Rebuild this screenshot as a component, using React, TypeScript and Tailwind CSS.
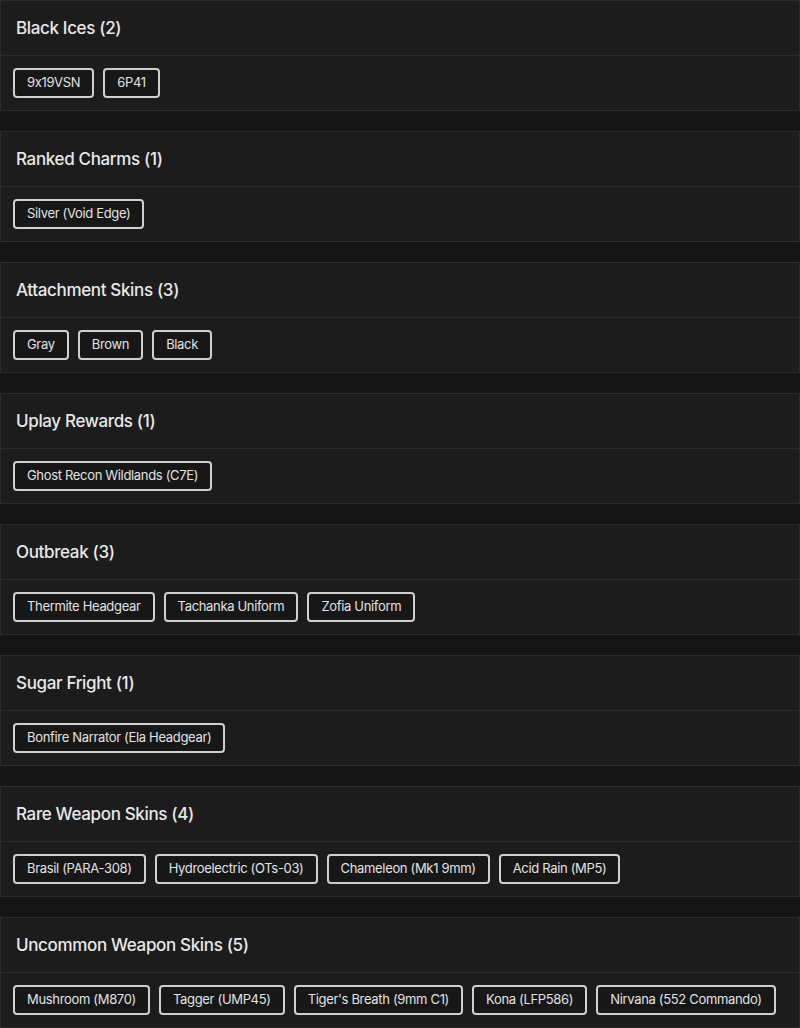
import React from "react";

const sections: { title: string; items: string[] }[] = [
  { title: "Black Ices (2)", items: ["9x19VSN", "6P41"] },
  { title: "Ranked Charms (1)", items: ["Silver (Void Edge)"] },
  { title: "Attachment Skins (3)", items: ["Gray", "Brown", "Black"] },
  { title: "Uplay Rewards (1)", items: ["Ghost Recon Wildlands (C7E)"] },
  { title: "Outbreak (3)", items: ["Thermite Headgear", "Tachanka Uniform", "Zofia Uniform"] },
  { title: "Sugar Fright (1)", items: ["Bonfire Narrator (Ela Headgear)"] },
  {
    title: "Rare Weapon Skins (4)",
    items: ["Brasil (PARA-308)", "Hydroelectric (OTs-03)", "Chameleon (Mk1 9mm)", "Acid Rain (MP5)"],
  },
  {
    title: "Uncommon Weapon Skins (5)",
    items: ["Mushroom (M870)", "Tagger (UMP45)", "Tiger's Breath (9mm C1)", "Kona (LFP586)", "Nirvana (552 Commando)"],
  },
];

export default function App() {
  return (
    <div
      className="min-h-[1028px] w-[800px] bg-[#151515] flex flex-col gap-[20px] [font-feature-settings:'calt'_0]"
      style={{ fontFamily: "Inter, 'Open Sans', sans-serif" }}
    >
      {sections.map((s) => (
        <div key={s.title} className="border border-[#2b2b2b] bg-[#1c1c1c]">
          <div className="h-[55px] flex items-center px-[15px] pt-[2px] border-b border-[#2b2b2b]">
            <span className="text-[17px] font-medium text-[#e8e8e8] tracking-[-0.35px]">{s.title}</span>
          </div>
          <div className="h-[54px] flex items-center gap-[9px] px-[12px]">
            {s.items.map((it) => (
              <span
                key={it}
                className="h-[30px] shrink-0 whitespace-nowrap flex items-center px-[12px] rounded-[4px] border-2 border-[#cfcfcf] bg-[#171717] text-[13px] tracking-[-0.33px] text-[#e2e2e2]"
              >
                {it}
              </span>
            ))}
          </div>
        </div>
      ))}
    </div>
  );
}
